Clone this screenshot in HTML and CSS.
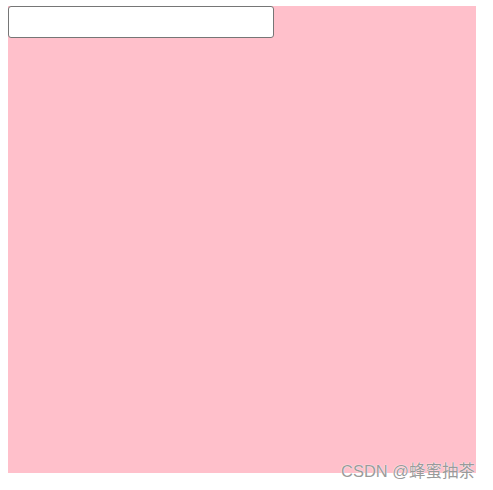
FILE: index.html
```html
<!DOCTYPE html>
<html>
<head>
<meta charset="utf-8">
<link rel="stylesheet" href="styles.css">
</head>
<body>
<div class="box">
  <input class="field" type="text">
</div>
<div class="watermark">CSDN @蜂蜜抽茶</div>
</body>
</html>
```
FILE: styles.css
```css
html, body {
  background: #ffffff;
}
body {
  margin: 6px 8px 8px 8px;
  font-family: "Liberation Sans", Arial, "Noto Sans CJK SC", sans-serif;
}
.box {
  width: 468px;
  height: 467px;
  background: #ffc0cb;
  display: flex;
  align-items: flex-start;
}
.field {
  box-sizing: border-box;
  width: 266px;
  height: 32px;
  margin: 0;
  padding: 1px 2px;
  border: 1px solid #767676;
  border-radius: 3px;
  background: #ffffff;
  outline: none;
}
.watermark {
  position: absolute;
  left: 341px;
  top: 461px;
  font-family: "Liberation Sans", Arial, "Noto Sans CJK SC", sans-serif;
  font-size: 16.5px;
  line-height: 20px;
  color: #9a9a9a;
  white-space: nowrap;
  text-shadow: 0 0 1px #ffffff, 0 0 1px #ffffff;
}
```
